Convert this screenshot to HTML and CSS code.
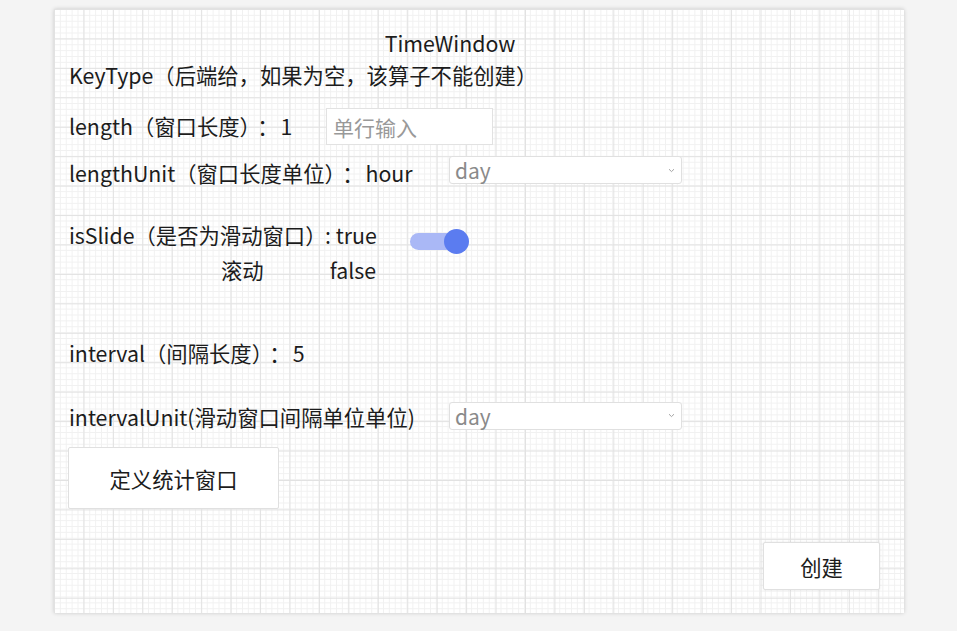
FILE: index.html
```html
<!DOCTYPE html>
<html lang="zh">
<head>
<meta charset="utf-8">
<link rel="stylesheet" href="styles.css">
</head>
<body>
<div class="card">
  <div class="title">TimeWindow</div>
  <div class="line">KeyType（后端给，如果为空，该算子不能创建）</div>
  <div class="row row-length">
    <span class="label">length（窗口长度）<span class="colon">：</span>1</span>
    <input class="text-input" type="text" placeholder="单行输入">
  </div>
  <div class="row row-unit">
    <span class="label label-unit">lengthUnit（窗口长度单位）<span class="colon">：</span>hour</span>
    <div class="select"><span>day</span><svg class="chev" width="7" height="5" viewBox="0 0 7 5"><path d="M1 1.2 L3.5 3.6 L6 1.2" fill="none" stroke="#999" stroke-width="0.9"/></svg></div>
  </div>
  <div class="slide-row">
    <div class="slide-label">isSlide（是否为滑动窗口）<br><span class="slide-indent">滚动</span></div>
    <div class="slide-values">: true<br>false</div>
    <div class="toggle"><div class="track"></div><div class="knob"></div></div>
  </div>
  <div class="line line-interval">interval（间隔长度）<span class="colon">：</span>5</div>
  <div class="row row-iunit">
    <span class="label label-unit">intervalUnit(滑动窗口间隔单位单位)</span>
    <div class="select"><span>day</span><svg class="chev" width="7" height="5" viewBox="0 0 7 5"><path d="M1 1.2 L3.5 3.6 L6 1.2" fill="none" stroke="#999" stroke-width="0.9"/></svg></div>
  </div>
  <button class="btn btn-define">定义统计窗口</button>
  <div class="footer">
    <button class="btn btn-create">创建</button>
  </div>
</div>
</body>
</html>
```

FILE: styles.css
```css
* { box-sizing: border-box; }
html, body { margin: 0; padding: 0; }
body {
  background: #f4f4f4;
  font-family: "Noto Sans CJK SC", "Noto Sans", sans-serif;
  color: #1c1c1c;
  font-size: 21.33px;
  padding: 9px 0 0 54px;
  height: 631px;
  overflow: hidden;
}
.card {
  width: 850px;
  height: 604px;
  background-color: #fff;
  background-image:
    linear-gradient(to right, #e2e2e2 1px, transparent 1px),
    linear-gradient(to bottom, #e2e2e2 1px, transparent 1px),
    linear-gradient(to right, #f1f1f1 1px, transparent 1px),
    linear-gradient(to bottom, #f1f1f1 1px, transparent 1px);
  background-size: 29.45px 29.45px, 29.45px 29.45px, 5.89px 5.89px, 5.89px 5.89px;
  background-position: 0 0;
  box-shadow: 0 0 4px rgba(0,0,0,0.18);
  padding: 19px 15px 0 15px;
  display: flex;
  flex-direction: column;
  align-items: flex-start;
}
.title {
  align-self: stretch;
  text-align: center;
  padding-right: 58px;
  line-height: 30px;
  height: 30px;
}
.line {
  line-height: 30px;
  height: 30px;
  margin-top: 2px;
  white-space: nowrap;
}
.colon {
  padding-left: 7px;
  margin-right: 2px;
}
.row {
  display: flex;
  align-items: center;
  white-space: nowrap;
}
.row-length { margin-top: 18px; height: 37px; }
.row-length .label { width: 257px; position: relative; top: -1px; }
.text-input {
  width: 167px;
  height: 37px;
  border: 1px solid #e2e2e2;
  background: #fff;
  font-family: inherit;
  font-size: 21px;
  padding: 0 6px;
  outline: none;
}
.text-input::placeholder { color: #999; }
.row-unit { margin-top: 10px; height: 30px; }
.label-unit { width: 380px; position: relative; top: 2px; }
.select {
  width: 233px;
  height: 28px;
  border: 1px solid #e0e0e0;
  border-radius: 3px;
  background: #fff;
  display: flex;
  align-items: center;
  justify-content: space-between;
  padding: 0 6px 0 5px;
  color: #8a8a8a;
  font-size: 21px;
}
.slide-row {
  margin-top: 32px;
  display: flex;
  align-items: flex-start;
  line-height: 35px;
  white-space: nowrap;
}
.slide-label { width: 256px; }
.slide-indent { padding-left: 152px; }
.slide-values { text-align: right; width: 51px; }
.toggle {
  width: 60px;
  height: 26px;
  margin-left: 34px;
  margin-top: 11px;
  display: flex;
  align-items: center;
}
.track {
  width: 56px;
  height: 17px;
  border-radius: 9px;
  background: #aab8f6;
}
.knob {
  width: 25px;
  height: 25px;
  border-radius: 50%;
  background: #5b7cf0;
  margin-left: -22px;
}
.line-interval { margin-top: 51px; }
.row-iunit { margin-top: 32px; }
.row-iunit .label-unit { top: 1px; }
.btn {
  font-family: inherit;
  font-size: 21.33px;
  color: #1c1c1c;
  background: #fff;
  border: 1px solid #e0e0e0;
  border-radius: 2px;
  cursor: pointer;
}
.btn-define {
  margin-top: 16px;
  margin-left: -1px;
  width: 211px;
  height: 62px;
}
.footer {
  align-self: stretch;
  display: flex;
  justify-content: flex-end;
  padding-right: 9px;
  margin-top: 33px;
}
.btn-create {
  width: 117px;
  height: 48px;
  box-shadow: 0 0 3px rgba(0,0,0,0.08);
}
```
